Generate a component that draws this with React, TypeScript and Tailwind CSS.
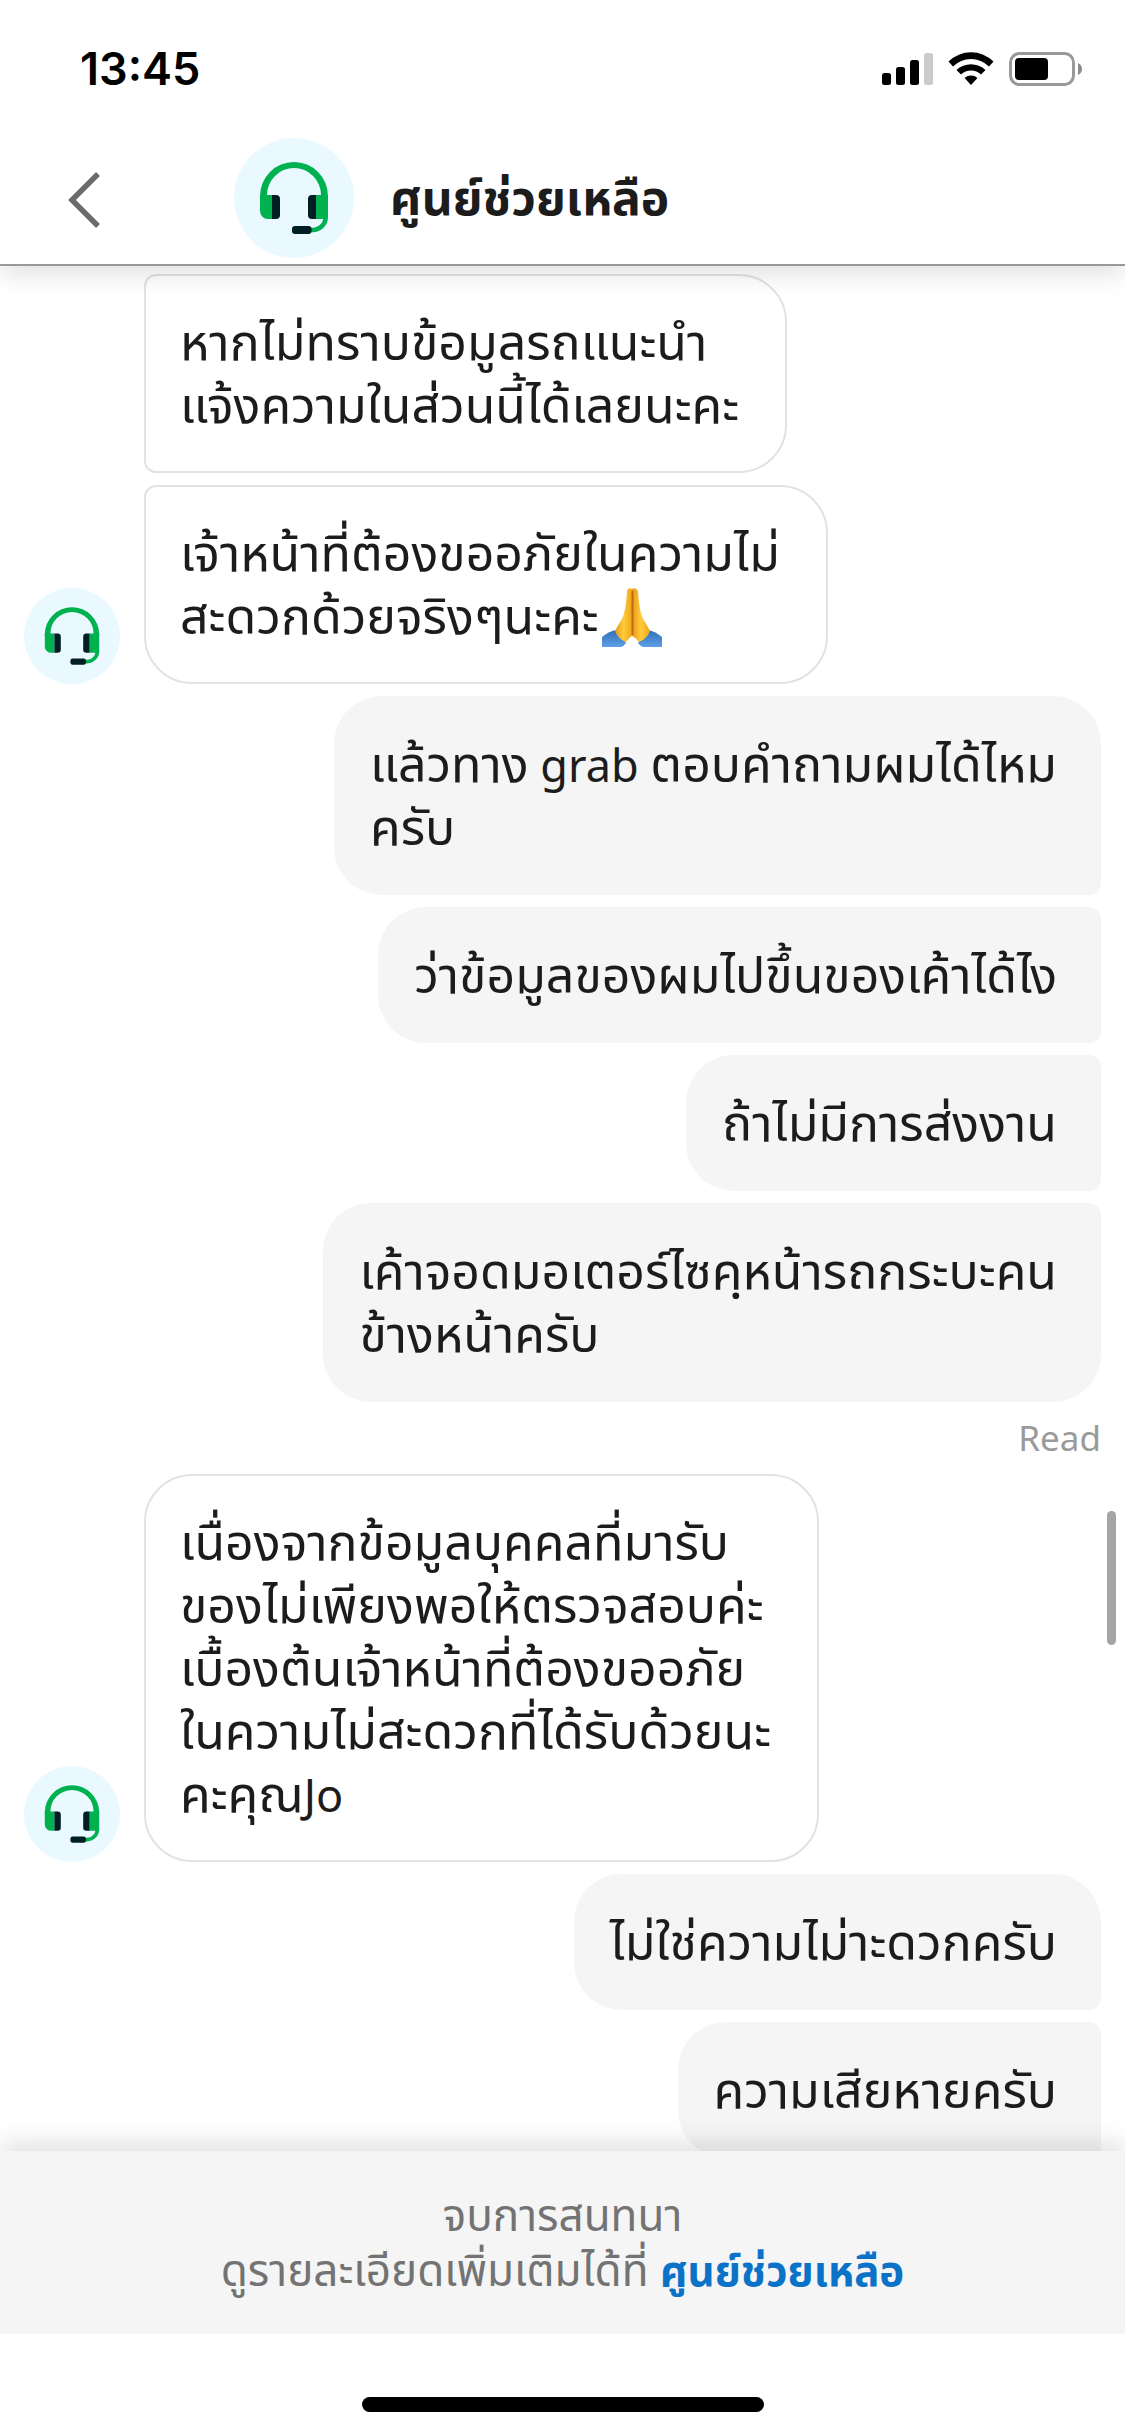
import { Fragment } from 'react'
import type { ReactNode } from 'react'

type Shape = 'single' | 'first' | 'middle' | 'last'

type Group = {
  from: 'agent' | 'me'
  status?: string
  messages: { shape: Shape; lines: ReactNode[] }[]
}

const groups: Group[] = [
  {
    from: 'agent',
    messages: [
      { shape: 'middle', lines: ['หากไม่ทราบข้อมูลรถแนะนำ', 'แจ้งความในส่วนนี้ได้เลยนะคะ'] },
      {
        shape: 'last',
        lines: [
          'เจ้าหน้าที่ต้องขออภัยในความไม่',
          <Fragment key="pray">
            สะดวกด้วยจริงๆนะคะ
            <PrayIcon />
          </Fragment>,
        ],
      },
    ],
  },
  {
    from: 'me',
    status: 'Read',
    messages: [
      {
        shape: 'first',
        lines: [
          <Fragment key="grab">
            แล้วทาง<span className="text-[45px]"> grab </span>ตอบคำถามผมได้ไหม
          </Fragment>,
          'ครับ',
        ],
      },
      { shape: 'middle', lines: ['ว่าข้อมูลของผมไปขึ้นของเค้าได้ไง'] },
      { shape: 'middle', lines: ['ถ้าไม่มีการส่งงาน'] },
      { shape: 'last', lines: ['เค้าจอดมอเตอร์ไซคฺหน้ารถกระบะคน', 'ข้างหน้าครับ'] },
    ],
  },
  {
    from: 'agent',
    messages: [
      {
        shape: 'single',
        lines: [
          'เนื่องจากข้อมูลบุคคลที่มารับ',
          'ของไม่เพียงพอให้ตรวจสอบค่ะ',
          'เบื้องต้นเจ้าหน้าที่ต้องขออภัย',
          'ในความไม่สะดวกที่ได้รับด้วยนะ',
          <Fragment key="name">
            คะคุณ<span className="text-[45px]">Jo</span>
          </Fragment>,
        ],
      },
    ],
  },
  {
    from: 'me',
    messages: [
      { shape: 'first', lines: ['ไม่ใช่ความไม่าะดวกครับ'] },
      { shape: 'middle', lines: ['ความเสียหายครับ'] },
    ],
  },
]

const agentShape: Record<Shape, string> = {
  single: 'rounded-[48px]',
  first: 'rounded-[48px] rounded-bl-xl',
  middle: 'rounded-[48px] rounded-l-xl',
  last: 'rounded-[48px] rounded-tl-xl',
}

const myShape: Record<Shape, string> = {
  single: 'rounded-[48px]',
  first: 'rounded-[48px] rounded-br-xl',
  middle: 'rounded-[48px] rounded-r-xl',
  last: 'rounded-[48px] rounded-tr-xl',
}

function PrayIcon() {
  return (
    <svg viewBox="0 0 60 60" role="img" aria-label="🙏" className="ml-[3px] inline-block size-15 align-[-14px]">
      <defs>
        <linearGradient id="hand" x1="0" x2="1">
          <stop offset="0" stopColor="#e8981a" />
          <stop offset="0.5" stopColor="#ffcb3a" />
          <stop offset="1" stopColor="#f0a51b" />
        </linearGradient>
        <linearGradient id="sleeve" x1="0" y1="0" x2="0" y2="1">
          <stop offset="0" stopColor="#2f6fb6" />
          <stop offset="1" stopColor="#5e9fe6" />
        </linearGradient>
      </defs>
      <path d="M0 49 Q7 43 15 42 L24 55 Q22 58 19 59 H0Z" fill="url(#sleeve)" />
      <path d="M60 49 Q53 43 45 42 L36 55 Q38 58 41 59 H60Z" fill="url(#sleeve)" />
      <path d="M30 1 Q26 -1 25 3 Q24 22 20 31 Q16 37 13 43 Q16 51 24 54 Q28 49 30 48Z" fill="url(#hand)" />
      <path d="M30 1 Q34 -1 36 3 Q37 22 41 31 Q45 37 48 43 Q45 51 37 54 Q33 49 30 48Z" fill="url(#hand)" />
      <path d="M30.500 3 V47" stroke="#c26a10" strokeWidth="2" />
    </svg>
  )
}

function HeadsetAvatar({ className }: { className: string }) {
  return (
    <svg viewBox="0 0 120 120" aria-hidden="true" className={className}>
      <circle cx="60" cy="60" r="60" fill="#e9f9ff" />
      <path d="M26 60 V58 A34 34 0 0 1 94 58 V60 H87 V57 A27 27 0 0 0 33 57 V60Z" fill="#00b14f" />
      <path d="M26 57 H38 V81 H34 A8 8 0 0 1 26 73Z" fill="#00b14f" />
      <path d="M82 57 H94 V80 L90 81 H82Z" fill="#00b14f" />
      <path d="M38 57 H42 A4 4 0 0 1 46 61 V77 A4 4 0 0 1 42 81 H38Z" fill="#001f24" />
      <path d="M82 57 H78 A4 4 0 0 0 74 61 V77 A4 4 0 0 0 78 81 H82Z" fill="#001f24" />
      <path d="M91.700 78 V79 A13 13 0 0 1 78.700 92 H77" fill="none" stroke="#00b14f" strokeWidth="4.600" />
      <rect x="58" y="88" width="19.500" height="8" rx="3" fill="#001f24" />
    </svg>
  )
}

function StatusBar() {
  return (
    <div className="flex h-33 shrink-0 items-start justify-between pt-12 pr-[42px] pl-20 text-black">
      <time className="font-['Inter',sans-serif] text-[45px] leading-[42px] font-semibold">13:45</time>
      <div className="flex gap-[15px] pt-1">
        {/* signal */}
        <svg viewBox="0 0 51 34" className="h-[34px] w-[51px]">
          <rect x="0" y="21" width="9" height="12" rx="2.500" />
          <rect x="14" y="15" width="9" height="18" rx="2.500" />
          <rect x="28" y="8" width="9" height="25" rx="2.500" />
          <rect x="42" y="1" width="9" height="32" rx="2.500" fill="#cbcbcb" />
        </svg>
        {/* wifi */}
        <svg viewBox="0 0 46 34" className="h-[34px] w-[46px]">
          <path d="M0.500 9.500 A32 32 0 0 1 45.500 9.500 L41 14.500 A25.500 25.500 0 0 0 5 14.500Z" />
          <path d="M8.500 18 A21 21 0 0 1 37.500 18 L33 22.500 A14.500 14.500 0 0 0 13 22.500Z" />
          <path d="M16.500 26 A10 10 0 0 1 29.500 26 L23 33Z" />
        </svg>
        {/* battery */}
        <svg viewBox="0 0 74 34" className="h-[34px] w-[74px]">
          <rect x="1.500" y="1.500" width="63" height="31" rx="9" fill="none" stroke="#999999" strokeWidth="3" />
          <rect x="6" y="6" width="33" height="22" rx="4" />
          <path d="M69 11 Q73 13 73 17 Q73 21 69 23Z" fill="#8c8c8c" />
        </svg>
      </div>
    </div>
  )
}

function Bubble({ from, shape, lines }: { from: 'agent' | 'me'; shape: Shape; lines: ReactNode[] }) {
  const style =
    from === 'agent'
      ? `border-2 border-[#e2e2e2] bg-white pt-[34px] pb-[35px] pl-[34px] pr-[46px] ${agentShape[shape]}`
      : `bg-[#f5f5f5] pt-9 pb-[37px] pl-9 pr-11 ${myShape[shape]}`

  return (
    <div className={`text-[50px] leading-[63px] whitespace-nowrap ${style}`}>
      {lines.map((line, i) => (
        <p key={i} className="h-[63px]">{line}</p>
      ))}
    </div>
  )
}

export default function App() {
  return (
    <div className="flex h-screen flex-col overflow-hidden bg-white font-['Noto_Sans','Noto_Sans_Thai',sans-serif] text-[#1c1c1c]">
      <header className="relative z-10 shrink-0 border-b-2 border-[#999999] bg-white shadow-[0_8px_24px_rgba(0,0,0,0.12)]">
        <StatusBar />
        <div className="flex h-33 items-center pl-15">
          <button type="button" aria-label="Back" className="flex h-20 w-[174px] items-center pt-1 pl-2">
            <svg viewBox="0 0 32 56" className="h-14 w-8" fill="none" stroke="#6b6b6b" strokeWidth="5.500">
              <path d="M30 2 L4 28 L30 54" />
            </svg>
          </button>
          <HeadsetAvatar className="size-30" />
          <h1 className="pb-1 pl-9 text-[48px] leading-[63px] font-bold">ศูนย์ช่วยเหลือ</h1>
        </div>
      </header>

      {/* Conversation */}
      <main className="relative flex min-h-0 flex-1 flex-col gap-3 overflow-hidden px-6 pt-2">
        {groups.map((group, i) => (
          <section key={i} className="flex shrink-0 items-end gap-6">
            {group.from === 'agent' && <HeadsetAvatar className="size-24 shrink-0" />}
            <div className={`flex flex-1 flex-col gap-3 ${group.from === 'me' ? 'items-end' : 'items-start'}`}>
              {group.messages.map((m, j) => (
                <Bubble key={j} from={group.from} shape={m.shape} lines={m.lines} />
              ))}
              {group.status && <p className="text-[35px] leading-12 text-[#9a9a9a]">{group.status}</p>}
            </div>
          </section>
        ))}
        {/* scroll thumb */}
        <div className="absolute top-[1245px] right-[9px] h-[134px] w-[9px] rounded-full bg-[#a5a5a5]" />
      </main>

      <footer className="relative z-10 shrink-0 bg-white">
        <div className="bg-[#f5f5f5] pt-9 pb-[37px] text-center text-[44px] leading-[55px] text-[#737373] shadow-[0_-8px_24px_rgba(0,0,0,0.12)]">
          <p>จบการสนทนา</p>
          <p>
            ดูรายละเอียดเพิ่มเติมได้ที่{' '}
            <a href="#help" className="text-[42px] font-bold text-[#0a73c8]">ศูนย์ช่วยเหลือ</a>
          </p>
        </div>
        <div className="flex justify-center bg-white pt-[63px] pb-6">
          <div className="h-[15px] w-[402px] rounded-full bg-black" />
        </div>
      </footer>
    </div>
  )
}
